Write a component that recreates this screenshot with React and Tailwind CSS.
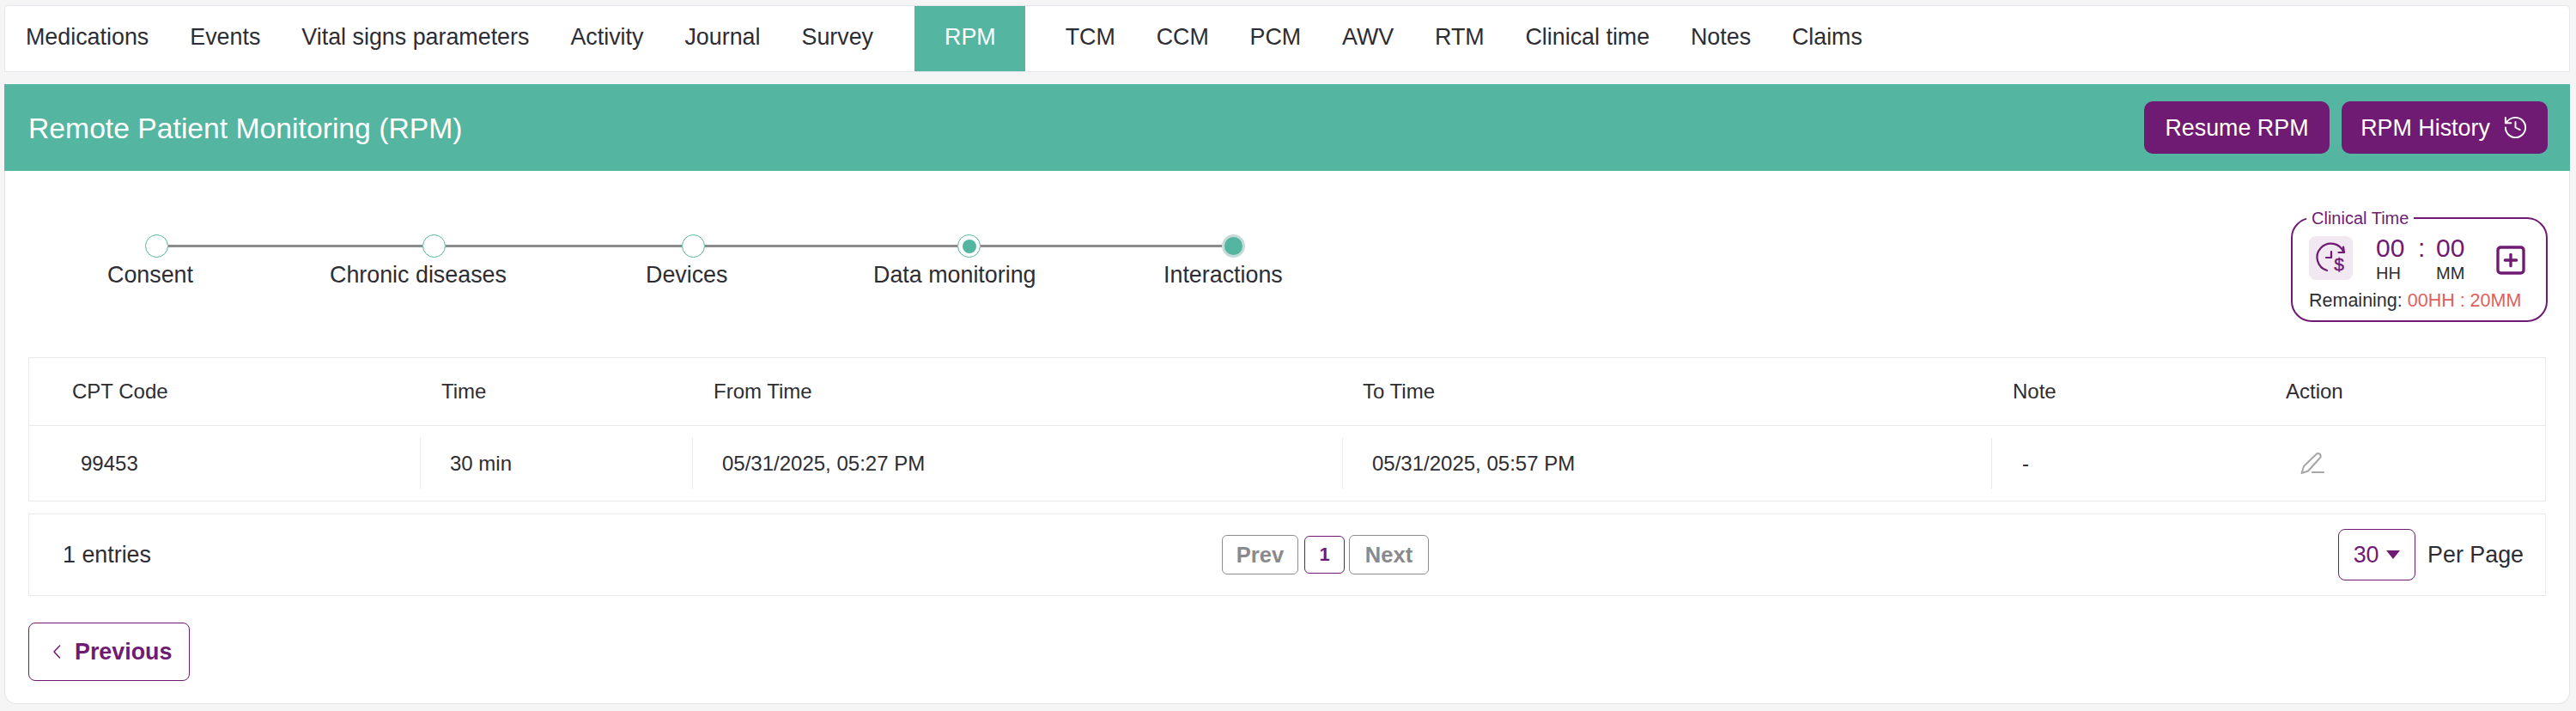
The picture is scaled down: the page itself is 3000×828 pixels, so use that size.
import React from "react";
import { History, SquarePlus } from "lucide-react";

const PURPLE = "#701b73";

function ClockDollar() {
  return (
    <svg width="51" height="51" viewBox="0 0 51 51" fill="none" stroke={PURPLE} strokeWidth="2.2" strokeLinecap="round" strokeLinejoin="round">
      <path d="M40.5 19 A16 16 0 1 0 21 40" />
      <path d="M40 12.5 L41 19 H34.5" />
      <path d="M26 18 V25 H20" />
      <text x="35" y="40" textAnchor="middle" fontSize="21" fontFamily="'Liberation Sans', sans-serif" fill={PURPLE} stroke={PURPLE} strokeWidth="0.4">$</text>
    </svg>
  );
}

function Pencil() {
  return (
    <svg width="28" height="27" viewBox="0 0 28 27" fill="none" stroke="#a6a6a6" strokeLinecap="round" strokeLinejoin="round">
      <path d="M1.5 25 L4 17 L19 2.5 C21 1 24.5 3 23.5 6.5 L9 22.5 Z" strokeWidth="2" />
      <path d="M14 24 H27" strokeWidth="2.2" />
    </svg>
  );
}

function Circle({ kind }) {
  if (kind === "filled") {
    return <div className="w-[27px] h-[27px] shrink-0 rounded-full bg-[#54b5a1] border-[3px] border-[#c6dad7]" />;
  }
  return (
    <div className="w-[27px] h-[27px] shrink-0 rounded-full bg-white border-[1.5px] border-[#54b5a1] flex items-center justify-center">
      {kind === "dot" && <div className="w-[16px] h-[16px] rounded-full bg-[#54b5a1]" />}
    </div>
  );
}

function Line({ className }) {
  return <div className={"h-[3px] bg-[#8c8c8c] " + className} />;
}

export default function App() {
  const navLeft = ["Medications", "Events", "Vital signs parameters", "Activity", "Journal", "Survey"];
  const navRight = ["TCM", "CCM", "PCM", "AWV", "RTM", "Clinical time", "Notes", "Claims"];
  return (
    <div className="min-h-[828px] bg-[#f5f5f5] pt-[6px] pl-[5px] pr-[7px] font-['Liberation_Sans',Arial,sans-serif] text-[#2d2d33] text-[26.85px] leading-[32px]">
      {/* Tabs */}
      <nav className="h-[78px] bg-white border border-[#e6e6ec] flex items-stretch pl-[24px] gap-[48px] rounded-t-[4px]">
        {navLeft.map((t) => (
          <div key={t} className="flex items-center pb-[4px]">{t}</div>
        ))}
        <div className="flex items-center pl-[35px] pr-[34px] pb-[4px] bg-[#54b5a1] text-white">RPM</div>
        <div className="flex gap-[47.8px] -ml-px">
          {navRight.map((t) => (
            <div key={t} className="flex items-center pb-[4px]">{t}</div>
          ))}
        </div>
      </nav>

      {/* Card */}
      <main className="mt-[14px] h-[722px] bg-white border-x border-b border-[#e4e4e8] rounded-b-[14px]">
        <header className="h-[101px] bg-[#54b5a1] flex items-center justify-between pl-[28px] pr-[26px] -mx-px">
          <h1 className="text-white text-[33.7px] leading-[40px]">Remote Patient Monitoring (RPM)</h1>
          <div className="flex gap-[14px]">
            <button className="h-[61px] w-[216px] rounded-[10px] bg-[#701b73] text-white flex items-center justify-center">Resume RPM</button>
            <button className="h-[61px] w-[240px] rounded-[10px] bg-[#701b73] text-white flex items-center justify-center gap-[14px]">
              RPM History
              <History size={31} strokeWidth={1.5} />
            </button>
          </div>
        </header>

        {/* Stepper + clinical time */}
        <section className="flex justify-between pt-[54px] pr-[25px] mb-[41px]">
          <div className="pt-[20px]">
            <div className="flex items-center pl-[163px]">
              <Circle />
              <Line className="w-[296px]" />
              <Circle />
              <Line className="w-[275px]" />
              <Circle />
              <Line className="w-[294px]" />
              <Circle kind="dot" />
              <Line className="w-[281px]" />
              <Circle kind="filled" />
            </div>
            <div className="flex mt-[4px] pl-[119px] whitespace-nowrap">
              <span className="w-[100px]">Consent</span>
              <span className="ml-[159px] w-[207px]">Chronic diseases</span>
              <span className="ml-[161px] w-[96px]">Devices</span>
              <span className="ml-[169px] w-[190px]">Data monitoring</span>
              <span className="ml-[148px]">Interactions</span>
            </div>
          </div>

          <div className="relative w-[299px] h-[122px] border-2 border-[#701b73] rounded-[24px] pl-[19px] pt-[20px]">
            <span className="absolute -top-[12px] left-[16px] bg-white px-[6px] text-[20px] leading-[22px] text-[#701b73]">Clinical Time</span>
            <div className="flex items-start">
              <div className="w-[51px] h-[51px] rounded-[8px] bg-[#f2e8f2] shrink-0">
                <ClockDollar />
              </div>
              <div className="ml-[27px] w-[33px] -mt-[3px] flex flex-col items-start">
                <span className="text-[30px] leading-[34px] text-[#701b73]">00</span>
                <span className="text-[20px] leading-[22px] mt-[1px]">HH</span>
              </div>
              <span className="ml-[16px] w-[21px] -mt-[3px] text-[30px] leading-[34px] text-[#701b73]">:</span>
              <div className="w-[33px] -mt-[3px] flex flex-col items-start">
                <span className="text-[30px] leading-[34px] text-[#701b73]">00</span>
                <span className="text-[20px] leading-[22px] mt-[1px]">MM</span>
              </div>
              <SquarePlus size={40} strokeWidth={2} color="#701b73" className="ml-[34px] mt-[8px] shrink-0" />
            </div>
            <div className="mt-[9px] text-[21.5px] leading-[24px] whitespace-nowrap">
              Remaining: <span className="text-[#e0605c]">00HH : 20MM</span>
            </div>
          </div>
        </section>

        {/* Table */}
        <div className="mx-[27px] border border-[#e9e9ec] text-[24px] leading-[28px]">
          <div className="grid grid-cols-[455px_317px_757px_756px_318px_1fr] h-[79px] items-center border-b border-[#e9e9ec]">
            <div className="pl-[50px]">CPT Code</div>
            <div className="pl-[25px]">Time</div>
            <div className="pl-[25px]">From Time</div>
            <div className="pl-[24px]">To Time</div>
            <div className="pl-[25px]">Note</div>
            <div className="pl-[25px]">Action</div>
          </div>
          <div className="grid grid-cols-[455px_317px_757px_756px_318px_1fr] h-[87px] items-center">
            <div className="pl-[60px]">99453</div>
            <div className="pl-[34px] h-[59px] flex items-center border-l border-[#e9e9ec]">30 min</div>
            <div className="pl-[34px] h-[59px] flex items-center border-l border-[#e9e9ec]">05/31/2025, 05:27 PM</div>
            <div className="pl-[34px] h-[59px] flex items-center border-l border-[#e9e9ec]">05/31/2025, 05:57 PM</div>
            <div className="pl-[35px] h-[59px] flex items-center border-l border-[#e9e9ec]">-</div>
            <div className="pl-[42px]"><Pencil /></div>
          </div>
        </div>

        {/* Pagination */}
        <div className="mx-[27px] mt-[14px] h-[96px] border border-[#e9e9ec] flex items-center pr-[25px]">
          <div className="w-[1389px] pl-[39px]">1 entries</div>
          <div className="flex items-center text-[25.5px] font-bold">
            <button className="h-[46px] w-[89px] rounded-[6px] border border-[#8d8d8d] text-[#8a8a8d] flex items-center justify-center">Prev</button>
            <button className="ml-[7px] h-[44px] w-[47px] rounded-[6px] border border-[#701b73] text-[#701b73] flex items-center justify-center text-[22px]">1</button>
            <button className="ml-[5px] h-[46px] w-[93px] rounded-[6px] border border-[#8d8d8d] text-[#8a8a8d] flex items-center justify-center">Next</button>
          </div>
          <div className="ml-auto flex items-center gap-[14px]">
            <div className="h-[60px] w-[90px] rounded-[8px] border border-[#701b73] text-[#701b73] flex items-center justify-center gap-[9px]">
              30
              <span className="w-0 h-0 border-x-[8px] border-x-transparent border-t-[10px] border-t-[#701b73]" />
            </div>
            <span>Per Page</span>
          </div>
        </div>

        <button className="ml-[27px] mt-[31px] h-[68px] w-[188px] rounded-[8px] border border-[#701b73] bg-white text-[#701b73] font-bold flex items-center pl-[27px] gap-[15px]">
          <svg width="11" height="18" viewBox="0 0 11 18" fill="none" stroke="#701b73" strokeWidth="1.5" strokeLinecap="round" strokeLinejoin="round" className="shrink-0">
            <path d="M8.5 2 L2 9 L8.5 16" />
          </svg>
          Previous
        </button>
      </main>
    </div>
  );
}
